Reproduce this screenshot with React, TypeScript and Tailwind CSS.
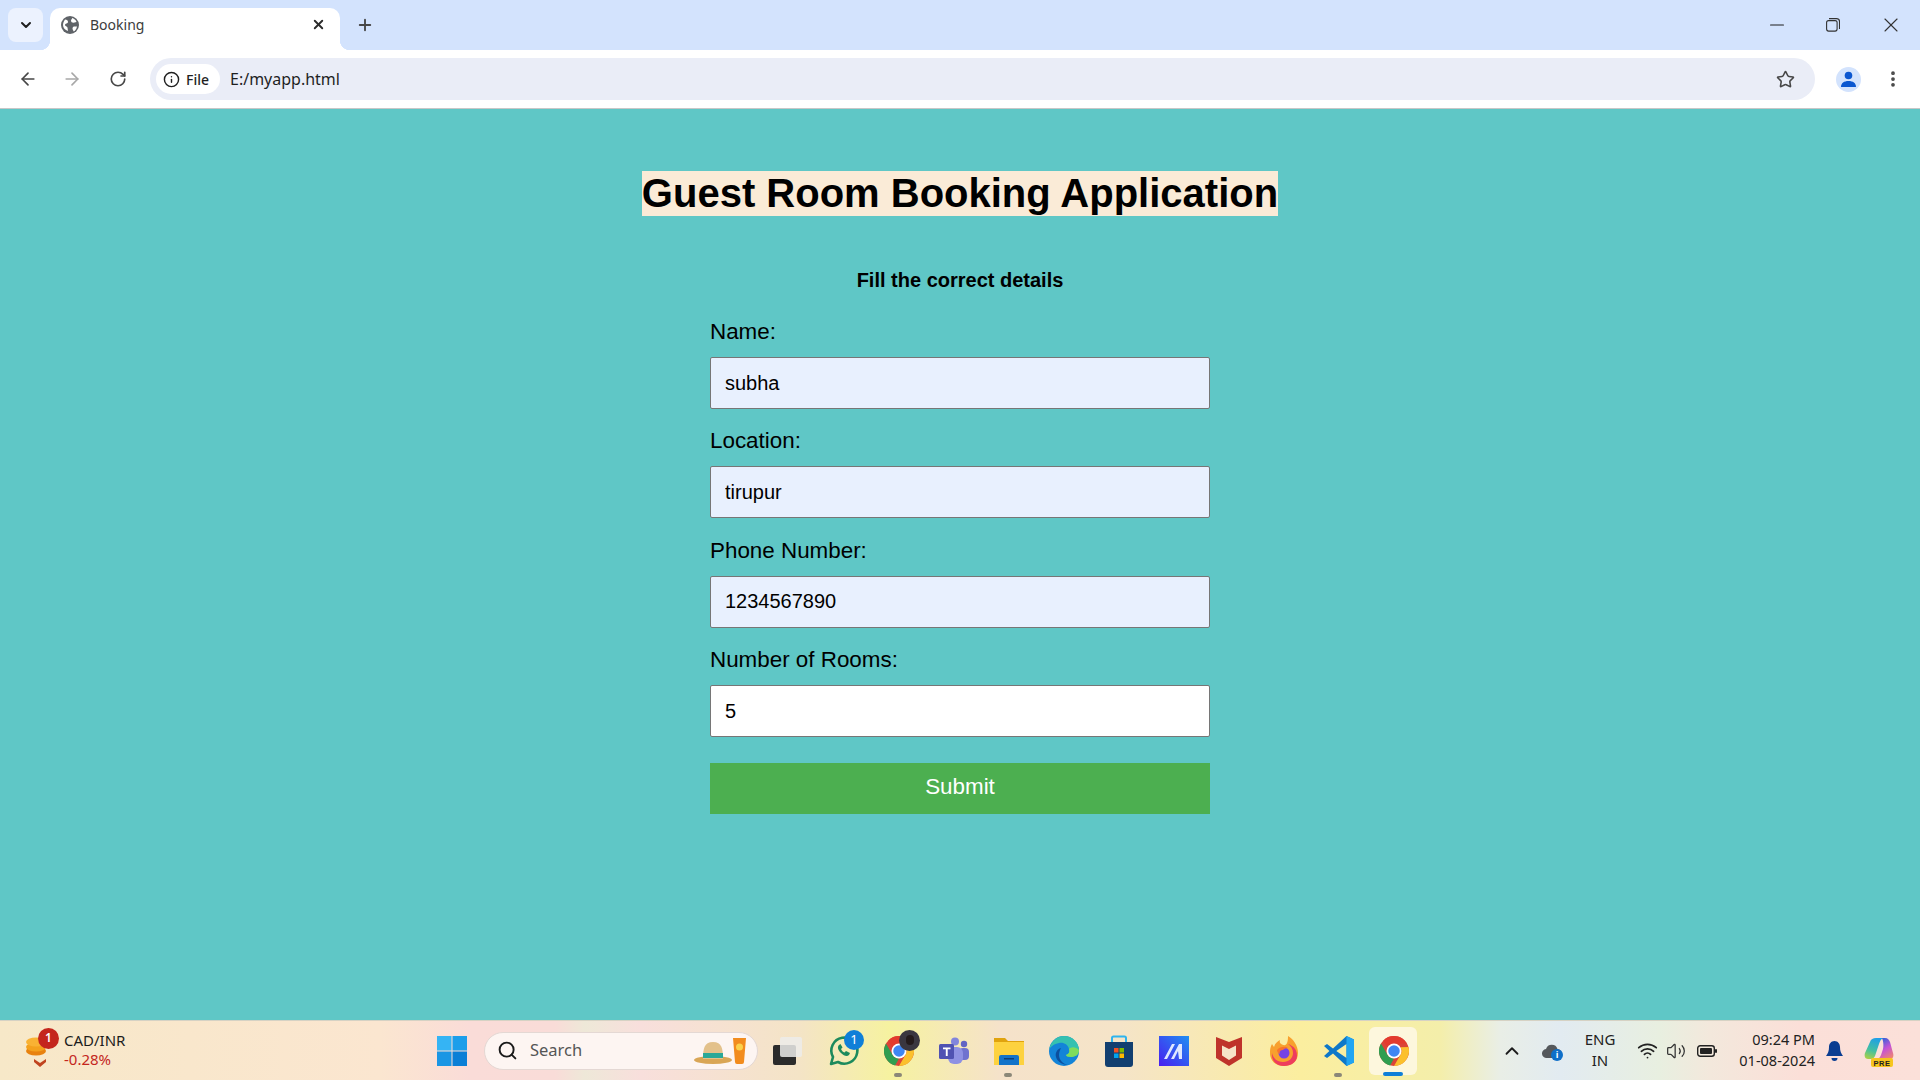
import React from "react";
import { ArrowLeft, ArrowRight, ChevronDown, ChevronUp, Info, Minus, MoreVertical, Plus, RotateCw, Search, Star, Volume2, Wifi, X } from "lucide-react";

const fields = [
  { label: "Name:", value: "subha", bg: "bg-[#e8f0fe]" },
  { label: "Location:", value: "tirupur", bg: "bg-[#e8f0fe]" },
  { label: "Phone Number:", value: "1234567890", bg: "bg-[#e8f0fe]" },
  { label: "Number of Rooms:", value: "5", bg: "bg-white" },
];

function ChromeLogo({ size = 30 }: { size?: number }) {
  const red = "M12 0A12 12 0 0 1 22.39 6H12A6 6 0 0 0 6.8 9L3.5 3.5A12 12 0 0 1 12 0Z";
  return (
    <svg width={size} height={size} viewBox="0 0 24 24">
      <circle cx="12" cy="12" r="12" fill="#db4437" />
      <path d={red} fill="#e33b2e" />
      <path d={red} fill="#fbc02d" transform="rotate(120 12 12)" />
      <path d={red} fill="#2f9e50" transform="rotate(240 12 12)" />
      <circle cx="12" cy="12" r="6" fill="#fff" />
      <circle cx="12" cy="12" r="4.6" fill="#3f86f3" />
    </svg>
  );
}

function WhatsApp() {
  return (
    <svg width="32" height="32" viewBox="0 0 32 32" fill="none">
      <path d="M3 29l2-7A13 13 0 1 1 10 27Z" stroke="#1c8a5c" strokeWidth="2.6" strokeLinejoin="round" />
      <path d="M11 10c-2 2-1 5 2 8s6 4 8 2l1-2-4-2-1.500 1.500c-1.500-.5-3-2-3.500-3.500l1.500-1.500-2-3.500Z" fill="#1c8a5c" />
    </svg>
  );
}

function Teams() {
  return (
    <svg width="32" height="32" viewBox="0 0 32 32">
      <circle cx="26" cy="9" r="3.200" fill="#6264c4" />
      <rect x="21" y="13" width="10" height="12" rx="4" fill="#6f72cf" />
      <circle cx="17" cy="6.500" r="4" fill="#8285dc" />
      <rect x="10" y="12" width="15" height="17" rx="6" fill="#8e91e3" />
      <rect x="1" y="9" width="15" height="15" rx="1.500" fill="#4f52b2" />
      <path d="M5 12.500h7.500v1.800H9.700V21H7.800v-6.700H5Z" fill="#fff" />
    </svg>
  );
}

function Files() {
  return (
    <svg width="32" height="32" viewBox="0 0 32 32">
      <path d="M1 3h11l3 3h16v24H1Z" fill="#e0a30e" />
      <rect x="1" y="7" width="30" height="23" fill="#fdd23f" />
      <path d="M6 22a2 2 0 0 1 2-2h16a2 2 0 0 1 2 2v8H6Z" fill="#1273c9" />
      <rect x="11" y="23" width="10" height="1.500" fill="#0b3f78" />
    </svg>
  );
}

function Edge() {
  return (
    <svg width="32" height="32" viewBox="0 0 32 32">
      <circle cx="16" cy="16" r="15" fill="#1384d8" />
      <path d="M1 15C3 5 10 1 16 1c9 0 15 7 15 14 0 5-4 7-8 7-3 0-5-1-5-2 3-1 4-3 3-6-1-5-6-7-10-6-5 1-9 4-10 7Z" fill="#35c1b0" />
      <path d="M31 15c0 5-4 7-8 7-3 0-5-1-5-2 3-1 4-3 3-6 2-2 6-3 10 1Z" fill="#7fdc5c" />
      <path d="M13 13c-4 1-6 5-5 9s6 8 12 8c-5-1-9-5-9-10 0-3 1-5 2-7Z" fill="#0c4f9e" />
    </svg>
  );
}

function Store() {
  return (
    <svg width="30" height="32" viewBox="0 0 30 32">
      <path d="M8 7V3a1.500 1.500 0 0 1 1.500-1.500h11A1.500 1.500 0 0 1 22 3v4" fill="none" stroke="#2fb4ee" strokeWidth="2" />
      <path d="M1 7h28v22a3 3 0 0 1-3 3H4a3 3 0 0 1-3-3Z" fill="#123f70" />
      <rect x="10" y="13" width="4.500" height="4.500" fill="#f25022" />
      <rect x="15.500" y="13" width="4.500" height="4.500" fill="#7fba00" />
      <rect x="10" y="18.500" width="4.500" height="4.500" fill="#00a4ef" />
      <rect x="15.500" y="18.500" width="4.500" height="4.500" fill="#ffb900" />
    </svg>
  );
}

function SlashApp() {
  return (
    <svg width="30" height="30" viewBox="0 0 30 30">
      <defs>
        <linearGradient id="slash" x1="0" y1="1" x2="1" y2="0">
          <stop offset="0" stopColor="#4a1df0" />
          <stop offset="1" stopColor="#1f8ff2" />
        </linearGradient>
      </defs>
      <rect width="30" height="30" fill="url(#slash)" />
      <path d="M5 23 13 8h3L8 23ZM12 23 20 8h3v15h-3l-1-8-4 8Z" fill="#dfe7ff" />
    </svg>
  );
}

function McAfee() {
  return (
    <svg width="28" height="30" viewBox="0 0 28 30">
      <path d="M1 1 14 6 27 1V22L14 30 1 22Z" fill="#bf332b" />
      <path d="M7 9.500 14 13 21 9.500V19.500L14 24 7 19.500Z" fill="#f6e3c8" />
    </svg>
  );
}

function Firefox() {
  return (
    <svg width="30" height="32" viewBox="0 0 30 32">
      <path d="M15 31C6 31 1 25 1 18c0-5 1-7 2-9l2 3c1-4 4-6 6-7-1 3 1 4 3 5 4 1 5-3 5-9 5 3 10 9 10 17 0 8-6 13-14 13Z" fill="#f8a02e" />
      <path d="M15 31C7 31 2 25 3 18c1 5 5 9 11 9 6 0 10-4 10-9 0-4-2-7-5-9 6 2 9 6 9 12 0 6-6 10-13 10Z" fill="#ee3d5d" />
      <circle cx="15" cy="18" r="5.500" fill="#7542e5" />
      <path d="M8 15c3-4 9-4 11-2-3 0-4 1-5 2-2 0-4 1-3 4-2-1-3-2-3-4Z" fill="#f9742c" />
    </svg>
  );
}

function VSCode() {
  return (
    <svg width="30" height="30" viewBox="0 0 100 100">
      <path fillRule="evenodd" d="M75 0 30 42 10 27 0 33 18 50 0 67 10 73 30 58 75 100 100 88V12ZM75 27 41 50 75 73Z" fill="#0e78c9" />
      <path d="M75 0 100 12V88L75 100Z" fill="#21a5f2" />
    </svg>
  );
}

function Copilot() {
  return (
    <svg width="30" height="32" viewBox="0 0 30 32">
      <defs>
        <linearGradient id="cpA" x1="0.600" y1="0" x2="0.300" y2="1">
          <stop offset="0" stopColor="#1f9fe8" />
          <stop offset="0.600" stopColor="#44c0a0" />
          <stop offset="1" stopColor="#a6cf4a" />
        </linearGradient>
        <linearGradient id="cpB" x1="0.300" y1="0" x2="0.800" y2="1">
          <stop offset="0" stopColor="#2a63d8" />
          <stop offset="0.500" stopColor="#c452d6" />
          <stop offset="1" stopColor="#f0866d" />
        </linearGradient>
      </defs>
      <path d="M12 3h7c-2 1-3 3-4 6l-4 12c-1 2-2 3-4 3H4c-3 0-4-3-3-6L6 7c1-3 3-4 6-4Z" fill="url(#cpA)" />
      <path d="M18 3h3c3 0 4 2 5 4l3 11c1 3 0 6-3 6H13c2 0 3-2 4-4l2-6c1-4 0-9-1-11Z" fill="url(#cpB)" />
      <rect x="7" y="23" width="22" height="9" rx="2" fill="#f7c51d" />
      <text x="18" y="30.500" textAnchor="middle" fontSize="7.500" fontWeight="700" fill="#222" fontFamily="Liberation Sans, sans-serif" letterSpacing="0.500">PRE</text>
    </svg>
  );
}

function TaskIcon({ children, dot, active }: { children: React.ReactNode; dot?: boolean; active?: boolean }) {
  return (
    <div className="relative flex h-[48px] w-[55px] shrink-0 items-center justify-center">
      {active && <div className="absolute left-[3px] top-0 h-[48px] w-[48px] rounded-md bg-[#fdf7dd]" />}
      <div className="relative flex items-center justify-center">{children}</div>
      {dot && <div className="absolute bottom-[-2px] left-[23px] h-[4px] w-[8px] rounded-full bg-[#8b8778]" />}
      {active && <div className="absolute bottom-[-1px] left-[17px] h-[4px] w-[20px] rounded-full bg-[#0f7fd8]" />}
    </div>
  );
}

export default function App() {
  return (
    <div className="flex h-screen w-full flex-col overflow-hidden font-['Liberation_Sans',sans-serif]">
      {/* browser tab strip */}
      <div className="flex h-[50px] shrink-0 bg-[#d3e3fd] pt-[8px]">
        <div className="ml-[8px] flex h-[34px] w-[35px] items-center justify-center rounded-lg bg-[#ecf2fe]">
          <ChevronDown size={16} strokeWidth={3} className="text-[#1f1f1f]" />
        </div>
        <div className="relative ml-[7px] flex h-[42px] w-[290px] items-center rounded-t-[10px] bg-white pb-[9px] pl-[11px] pr-[14px]">
          <div className="absolute bottom-0 left-[-10px] h-[10px] w-[10px] bg-[radial-gradient(circle_at_0_0,#d3e3fd_10px,#fff_10.5px)]" />
          <div className="absolute bottom-0 right-[-10px] h-[10px] w-[10px] bg-[radial-gradient(circle_at_100%_0,#d3e3fd_10px,#fff_10.5px)]" />
          <svg width="18" height="18" viewBox="0 0 18 18">
            <circle cx="9" cy="9" r="9" fill="#5f6368" />
            <path d="M4 3.500c2 0 3 1 3 2.500 0 2-3 1-3 3 0 1.500 2 1 2.500 2.500l.5 3.500C4 14 2 12 2 9c0-2 1-4 2-5.500ZM11 2c2 .5 4 2 4.500 4l-3 .8c-1.500 0-2.500-1-2.500-2.300C10 3.500 11.300 3.200 11 2ZM13 10.500h3c-.5 2.500-1.500 4-3.300 5L11.500 13c0-1.500.5-2.500 1.500-2.500Z" fill="#fff" />
          </svg>
          <span className="ml-[11px] flex-1 font-['Noto_Sans',sans-serif] text-[14px] text-[#3c3c3c]">Booking</span>
          <X size={15} strokeWidth={3} className="text-[#2b2b2b]" />
        </div>
        <div className="ml-[16px] flex h-[34px] items-center">
          <Plus size={18} strokeWidth={2.500} className="text-[#474747]" />
        </div>
        <div className="flex-1" />
        <div className="flex h-[34px] items-center">
          <Minus size={22} strokeWidth={1.300} className="mr-[38px] text-[#1f1f1f]" />
          <svg width="14" height="14" viewBox="0 0 14 14" fill="none" stroke="#333" strokeWidth="1.100" className="mr-[39px]">
            <rect x="0.600" y="2.600" width="10.500" height="10.500" rx="2" />
            <path d="M3 .6h7.500a3 3 0 0 1 3 3V11" />
          </svg>
          <X size={24} strokeWidth={1.100} className="mr-[17px] text-[#333]" />
        </div>
      </div>

      {/* browser toolbar */}
      <div className="flex h-[59px] shrink-0 items-center rounded-t-[10px] border-b border-[#c7c7c7] bg-white">
        <ArrowLeft size={20} strokeWidth={2} className="ml-[18px] text-[#474747]" />
        <ArrowRight size={20} strokeWidth={2} className="ml-[24px] text-[#a8a8a8]" />
        <RotateCw size={18} strokeWidth={2.200} className="ml-[27px] text-[#474747]" />
        <div className="ml-[23px] flex h-[42px] w-[1665px] items-center rounded-full bg-[#eaedf7] pl-[6px]">
          <div className="flex h-[30px] w-[64px] items-center rounded-full bg-white pl-[7px]">
            <Info size={17} strokeWidth={2} className="text-[#1f1f1f]" />
            <span className="ml-[6px] font-['Noto_Sans',sans-serif] text-[14px] font-medium text-[#1f1f1f]">File</span>
          </div>
          <span className="ml-[10px] font-['Noto_Sans',sans-serif] text-[16px] text-[#1f1f1f]">E:/myapp.html</span>
          <div className="flex-1" />
          <Star size={19} strokeWidth={2} className="mr-[20px] text-[#474747]" />
        </div>
        <div className="ml-[21px] flex h-[25px] w-[25px] items-center justify-center rounded-full bg-[#d3e3fd]">
          <svg width="17" height="17" viewBox="0 0 17 17" fill="#0b57d0">
            <circle cx="8.500" cy="4.500" r="3.800" />
            <path d="M1 16c0-4 3-6 7.500-6S16 12 16 16Z" />
          </svg>
        </div>
        <MoreVertical size={20} strokeWidth={2.500} className="ml-[22px] text-[#474747]" />
      </div>

      {/* page */}
      <main className="flex flex-1 flex-col items-center bg-[#5fc7c6] pt-[62px] text-black">
        <h1 className="bg-[#faebd7] text-[40px] font-bold leading-[45px]">Guest Room Booking Application</h1>
        <h2 className="mt-[53px] text-[20px] font-bold leading-[23px]">Fill the correct details</h2>
        <form className="mt-[14px] flex w-[500px] flex-col">
          {fields.map((field) => (
            <div key={field.label} className="mb-[6.400px] flex flex-col">
              <label className="mb-[12px] mt-[13px] text-[22.400px] leading-[26px]">{field.label}</label>
              <input
                readOnly
                value={field.value}
                className={`h-[52px] w-full rounded-[2px] border border-[#767676] px-[14px] text-[20px] text-black ${field.bg}`}
              />
            </div>
          ))}
          <button type="button" className="mt-[19px] h-[51px] w-full bg-[#4caf50] pb-[2px] text-[22.400px] text-white">
            Submit
          </button>
        </form>
      </main>

      {/* windows taskbar */}
      <div className="flex h-[60px] shrink-0 items-center border-t border-[#d6d2c4] bg-[linear-gradient(90deg,#f7e8c8_0,#fbe6d0_380px,#fadcd8_470px,#f9dcd8_555px,#eee8d8_585px,#f8dfdc_640px,#f4e4c6_800px,#f6f2a0_890px,#f5e2ca_1000px,#f5e4c8_1120px,#fbee9f_1300px,#f4eeaa_1440px,#e9eee6_1500px,#e2ebf1_1560px,#e8efe0_1660px,#f3e8dc_1710px,#fbdfd8_1800px,#fbe0d9_1920px)] font-['Noto_Sans',sans-serif]">
        <div className="flex w-[424px] shrink-0 items-center pl-[24px]">
          <div className="relative h-[40px] w-[40px] shrink-0">
            <svg width="26" height="36" viewBox="0 0 26 36" className="absolute left-[1px] top-[4px]">
              <ellipse cx="11" cy="16" rx="10" ry="4.500" fill="#e8820f" />
              <ellipse cx="11" cy="12" rx="10" ry="4.500" fill="#f4a11d" />
              <ellipse cx="11" cy="7" rx="10" ry="4.500" fill="#f9b233" />
              <path d="M9 24l6 4 6-4v3l-6 5-6-5Z" fill="#c0441f" />
            </svg>
            <div className="absolute left-[14px] top-[-3px] flex h-[21px] w-[21px] items-center justify-center rounded-full bg-[#c4261d] text-[12px] font-semibold text-white">1</div>
          </div>
          <div className="flex flex-col pb-[2px] text-[15px] leading-[19px]">
            <span className="text-[#1c1c1c]">CAD/INR</span>
            <span className="text-[#c4261d]">-0.28%</span>
          </div>
        </div>
        <TaskIcon>
          <svg width="30" height="30" viewBox="0 0 30 30">
            <rect width="14.500" height="14.500" fill="#35b4f4" />
            <rect x="15.500" width="14.500" height="14.500" fill="#1c9eea" />
            <rect y="15.500" width="14.500" height="14.500" fill="#1a96e4" />
            <rect x="15.500" y="15.500" width="14.500" height="14.500" fill="#0b7fd6" />
          </svg>
        </TaskIcon>
        <div className="ml-[5px] flex h-[38px] w-[274px] shrink-0 items-center rounded-full border border-[#e4d8d4] bg-[#fdf5f2] pl-[12px]">
          <Search size={21} strokeWidth={2.200} className="text-[#1a1a1a]" />
          <span className="ml-[12px] flex-1 text-[16.500px] text-[#555]">Search</span>
          <svg width="52" height="28" viewBox="0 0 52 28" className="mr-[11px]">
            <ellipse cx="19" cy="23" rx="19" ry="4" fill="#d9a656" />
            <path d="M9 22C9 12 10 5 19 5s10 7 10 17Z" fill="#e3c18b" />
            <path d="M9 16h20v5H9Z" fill="#2aa898" />
            <path d="M39 1h13l-2 24a2 2 0 0 1-2 2h-5a2 2 0 0 1-2-2Z" fill="#f28c1e" />
            <circle cx="45.500" cy="10" r="3.500" fill="#fbd14b" />
          </svg>
        </div>
        <TaskIcon>
          <svg width="30" height="28" viewBox="0 0 30 28" className="ml-[5px]">
            <rect x="0" y="8" width="23" height="20" rx="2" fill="#2b2b2b" />
            <rect x="7" y="0" width="22" height="20" rx="2" fill="#ececea" fillOpacity="0.850" />
          </svg>
        </TaskIcon>
        <div className="w-[3px] shrink-0" />
        <div className="relative">
          <TaskIcon><WhatsApp /></TaskIcon>
          <div className="absolute left-[28px] top-[3px] flex h-[20px] w-[20px] items-center justify-center rounded-full bg-[#0f7fd8] text-[13px] text-white">1</div>
        </div>
        <div className="relative">
          <TaskIcon dot><ChromeLogo /></TaskIcon>
          <div className="absolute left-[28px] top-[3px] flex h-[21px] w-[21px] items-center justify-center rounded-full bg-[#3a3640]">
            <div className="h-[10px] w-[8px] rounded-full bg-[#241a1c]" />
          </div>
        </div>
        <TaskIcon><Teams /></TaskIcon>
        <TaskIcon dot><Files /></TaskIcon>
        <TaskIcon><Edge /></TaskIcon>
        <TaskIcon><Store /></TaskIcon>
        <TaskIcon><SlashApp /></TaskIcon>
        <TaskIcon><McAfee /></TaskIcon>
        <TaskIcon><Firefox /></TaskIcon>
        <TaskIcon dot><VSCode /></TaskIcon>
        <TaskIcon active><ChromeLogo /></TaskIcon>

        <div className="ml-[75px] flex w-[32px] shrink-0 justify-center">
          <ChevronUp size={22} strokeWidth={2} className="text-[#1c1c1c]" />
        </div>
        <div className="relative ml-[8px] flex w-[32px] shrink-0 justify-center">
          <svg width="20" height="16" viewBox="0 0 20 16">
            <path d="M5 15a4.500 4.500 0 0 1-1-9 6 6 0 0 1 11.500 0A4.500 4.500 0 0 1 15 15Z" fill="#55585c" />
          </svg>
          <div className="absolute left-[15px] top-[6px] flex h-[12px] w-[12px] items-center justify-center rounded-full bg-[#0f6fc9] text-[9px] font-bold text-white">i</div>
        </div>
        <div className="ml-[12px] flex w-[40px] shrink-0 flex-col items-center pb-[2px] text-[15px] leading-[21px] text-[#222]">
          <span>ENG</span>
          <span>IN</span>
        </div>
        <div className="ml-[15px] flex w-[24px] shrink-0 justify-center"><Wifi size={21} strokeWidth={2} className="text-[#222]" /></div>
        <div className="ml-[5px] flex w-[24px] shrink-0 justify-center"><Volume2 size={20} strokeWidth={1.500} className="text-[#333]" /></div>
        <div className="ml-[7px] flex w-[24px] shrink-0 justify-center">
          <svg width="20" height="12" viewBox="0 0 20 12">
            <rect x="0.700" y="0.700" width="16.600" height="10.600" rx="2.500" fill="none" stroke="#222" strokeWidth="1.400" />
            <rect x="3" y="3" width="12" height="6" rx="1" fill="#222" />
            <rect x="18" y="4" width="2" height="4" rx="1" fill="#222" />
          </svg>
        </div>
        <div className="ml-[8px] flex w-[88px] shrink-0 flex-col items-end pb-[2px] text-[14.500px] leading-[21px] text-[#222]">
          <span>09:24 PM</span>
          <span>01-08-2024</span>
        </div>
        <div className="ml-[9px] flex w-[20px] shrink-0 justify-center">
          <svg width="17" height="20" viewBox="0 0 17 20" fill="#0a3d91">
            <path d="M8.500 0C5 0 3 3 3 6c0 4-1 6-3 9h17c-2-3-3-5-3-9 0-3-2-6-5.500-6Z" />
            <path d="M5.500 17a3 3 0 0 0 6 0Z" />
          </svg>
        </div>
        <div className="ml-[20px] flex w-[30px] shrink-0 justify-center"><Copilot /></div>
      </div>
    </div>
  );
}
